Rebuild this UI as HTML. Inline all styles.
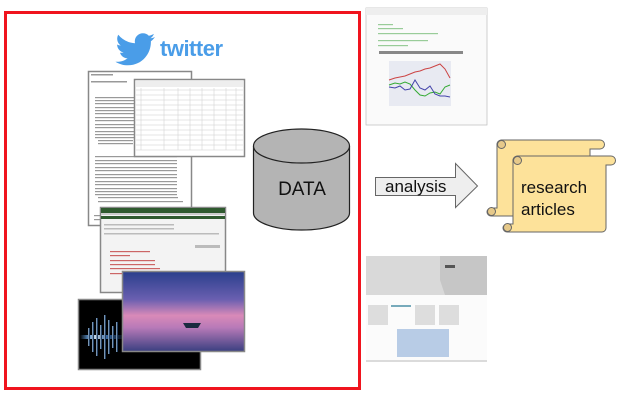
<!DOCTYPE html>
<html><head><style>
html,body{margin:0;padding:0;background:#fff;width:639px;height:409px;overflow:hidden;font-family:"Liberation Sans",sans-serif}
</style></head><body>
<svg width="639" height="409" xmlns="http://www.w3.org/2000/svg" font-family="Liberation Sans, sans-serif">
<defs>
<linearGradient id="sky" x1="0" y1="0" x2="0" y2="1">
<stop offset="0" stop-color="#2a3f8c"/><stop offset="0.35" stop-color="#6a5fb0"/><stop offset="0.55" stop-color="#d98ab8"/><stop offset="0.7" stop-color="#b87ab8"/><stop offset="1" stop-color="#3a3f80"/>
</linearGradient>
<linearGradient id="wv" x1="0" y1="0" x2="1" y2="0">
<stop offset="0" stop-color="#000"/><stop offset="0.2" stop-color="#6aa8e8"/><stop offset="0.35" stop-color="#e0f0ff"/><stop offset="0.6" stop-color="#3a70b0"/><stop offset="1" stop-color="#000"/>
</linearGradient>
</defs>
<rect x="5.5" y="12.5" width="354" height="376" fill="none" stroke="#f0141e" stroke-width="3"/>
<path d="M155 37c-1.5.7-3 1.1-4.6 1.3 1.7-1 2.9-2.600 3.5-4.4-1.6.9-3.300 1.6-5.100 1.900-1.500-1.600-3.600-2.500-5.900-2.500-4.400 0-8.100 3.600-8.100 8.100 0 .6.1 1.200.2 1.800-6.700-.3-12.700-3.600-16.700-8.500-.7 1.200-1.100 2.600-1.100 4.100 0 2.800 1.400 5.300 3.600 6.700-1.300 0-2.600-.4-3.700-1 0 3.900 2.800 7.200 6.500 8-.7.2-1.400.3-2.100.3-.5 0-1 0-1.500-.1 1 3.200 4 5.600 7.600 5.600-2.800 2.200-6.300 3.500-10.100 3.500-.7 0-1.300 0-2-.1 3.600 2.300 7.900 3.600 12.400 3.600 14.900 0 23-12.300 23-23v-1c1.600-1.100 2.900-2.600 4-4.200z" fill="#4a9de8"/>
<text x="160" y="56" font-size="22" font-weight="bold" fill="#4a9de8" letter-spacing="-0.5">twitter</text>
<rect x="88.5" y="71.5" width="103" height="154" fill="#fff" stroke="#888" stroke-width="1.5"/>
<g fill="#999">
<rect x="91" y="74" width="22" height="1.5"/><rect x="91" y="81" width="36" height="1.5"/>
<rect x="95" y="97" width="40" height="1.2"/><rect x="95" y="100" width="40" height="1.2"/><rect x="95" y="103" width="40" height="1.2"/><rect x="95" y="107" width="40" height="1.2"/><rect x="95" y="110" width="40" height="1.2"/><rect x="95" y="113" width="40" height="1.2"/><rect x="95" y="117" width="40" height="1.2"/><rect x="95" y="120" width="40" height="1.2"/><rect x="95" y="124" width="40" height="1.2"/><rect x="95" y="127" width="40" height="1.2"/><rect x="95" y="131" width="40" height="1.2"/><rect x="95" y="134" width="40" height="1.2"/><rect x="95" y="137" width="40" height="1.2"/><rect x="98" y="140" width="35" height="1.2"/><rect x="98" y="143" width="35" height="1.2"/>
<rect x="95" y="156" width="82" height="1.2"/><rect x="95" y="160" width="82" height="1.2"/><rect x="95" y="163" width="82" height="1.2"/><rect x="95" y="167" width="82" height="1.2"/><rect x="95" y="170" width="82" height="1.2"/><rect x="95" y="174" width="82" height="1.2"/><rect x="95" y="177" width="82" height="1.2"/><rect x="95" y="181" width="82" height="1.2"/><rect x="95" y="184" width="82" height="1.2"/><rect x="95" y="188" width="82" height="1.2"/><rect x="95" y="191" width="82" height="1.2"/><rect x="95" y="194" width="82" height="1.2"/><rect x="98" y="197" width="80" height="1.2"/><rect x="98" y="201" width="85" height="1.2"/>
<rect x="94" y="215" width="8" height="1.2"/><rect x="94" y="219" width="8" height="1.2"/>
</g>
<rect x="134.5" y="79.5" width="110" height="77" fill="#fff" stroke="#888" stroke-width="1.5"/>
<rect x="136" y="81" width="107" height="6" fill="#eee"/>
<g stroke="#ccc" stroke-width="0.5">
<line x1="136" y1="90" x2="243" y2="90"/><line x1="136" y1="95" x2="243" y2="95"/><line x1="136" y1="100" x2="243" y2="100"/><line x1="136" y1="105" x2="243" y2="105"/><line x1="136" y1="110" x2="243" y2="110"/><line x1="136" y1="115" x2="243" y2="115"/><line x1="136" y1="120" x2="243" y2="120"/><line x1="136" y1="125" x2="243" y2="125"/><line x1="136" y1="130" x2="243" y2="130"/><line x1="136" y1="135" x2="243" y2="135"/><line x1="136" y1="140" x2="243" y2="140"/><line x1="136" y1="145" x2="243" y2="145"/><line x1="136" y1="150" x2="243" y2="150"/>
<line x1="141" y1="88" x2="141" y2="150"/><line x1="164" y1="88" x2="164" y2="150"/><line x1="178" y1="88" x2="178" y2="150"/><line x1="190" y1="88" x2="190" y2="150"/><line x1="202" y1="88" x2="202" y2="150"/><line x1="214" y1="88" x2="214" y2="150"/><line x1="226" y1="88" x2="226" y2="150"/><line x1="236" y1="88" x2="236" y2="150"/>
</g>
<rect x="100.5" y="207.5" width="125" height="85" fill="#f3f3f3" stroke="#888" stroke-width="1.5"/>
<rect x="101" y="208" width="124" height="5" fill="#2f5a2f"/>
<rect x="101" y="213" width="124" height="2" fill="#ccc"/>
<rect x="101" y="216" width="124" height="3" fill="#2f5a2f"/>
<g fill="#bbb"><rect x="104" y="224" width="30" height="1.5"/><rect x="134" y="224" width="40" height="1.5"/><rect x="104" y="228" width="70" height="1.5"/><rect x="104" y="233" width="115" height="1.5"/><rect x="195" y="245" width="25" height="3"/></g>
<g fill="#c66"><rect x="110" y="251" width="40" height="1.2"/><rect x="110" y="255" width="20" height="1.2"/><rect x="110" y="260" width="45" height="1.2"/><rect x="110" y="264" width="45" height="1.2"/><rect x="110" y="268" width="50" height="1.2"/><rect x="110" y="273" width="40" height="1.2"/></g>
<rect x="78.5" y="299.5" width="122" height="70" fill="#000" stroke="#888" stroke-width="1.5"/>
<g fill="url(#wv)" opacity="0.9">
<rect x="80" y="335" width="45" height="4"/>
<rect x="88" y="328" width="2" height="18"/><rect x="92" y="322" width="2" height="30"/><rect x="96" y="318" width="2" height="38"/><rect x="100" y="325" width="2" height="24"/><rect x="104" y="315" width="2" height="44"/><rect x="108" y="320" width="2" height="34"/><rect x="112" y="326" width="2" height="22"/><rect x="116" y="322" width="2" height="30"/>
</g>
<rect x="122.5" y="271.5" width="122" height="80" fill="url(#sky)" stroke="#888" stroke-width="1.5"/>
<path d="M183 323 l18 0 -3 5 -12 0z" fill="#1a2a40"/>
<path d="M253.5 146 L253.5 213 A48 17 0 0 0 349.5 213 L349.5 146" fill="#b4b4b4" stroke="#222" stroke-width="1.2"/>
<ellipse cx="301.5" cy="146" rx="48" ry="17" fill="#b4b4b4" stroke="#222" stroke-width="1.2"/>
<text x="302" y="195" font-size="19" text-anchor="middle" fill="#111">DATA</text>
<rect x="366" y="8" width="121" height="117" fill="#fafafa" stroke="#bbb" stroke-width="0.7"/>
<rect x="366" y="8" width="121" height="7" fill="#eee"/>
<g fill="#9c9">
<rect x="378" y="24" width="15" height="1.2"/><rect x="378" y="28" width="25" height="1.2"/><rect x="378" y="33" width="60" height="1.2"/><rect x="378" y="40" width="50" height="1.2"/><rect x="378" y="45" width="30" height="1.2"/></g>
<rect x="379" y="51" width="84" height="3" fill="#888"/>
<rect x="389" y="61" width="62" height="45" fill="#e8eaf2"/>
<polyline points="389,80 395,78 400,77 405,76 410,74 415,72 420,71 425,69 430,68 435,66 440,64 445,69 450,78" fill="none" stroke="#c44" stroke-width="1"/>
<polyline points="389,85 395,83 400,84 405,82 410,84 415,90 420,95 425,96 430,93 435,92 440,94 445,87 450,85" fill="none" stroke="#3a3" stroke-width="1"/>
<polyline points="389,87 395,88 400,86 405,90 410,89 415,80 420,88 425,90 430,86 435,94 440,96 445,96 450,97" fill="none" stroke="#44a" stroke-width="1"/>
<path d="M375.5 177.5 H455.5 V163.5 L477.5 186 L455.5 207.5 V195.5 H375.5 Z" fill="#eee" stroke="#666" stroke-width="1"/>
<text x="385" y="192" font-size="17" fill="#111">analysis</text>
<g fill="#fde29a" stroke="#666" stroke-width="1">
<path d="M497 145 V208 H491 A4 4 0 0 0 491 216 H590 V149 H600 A4.5 4.5 0 0 0 600 140 H501 A4.5 4.5 0 0 0 497 145 Z"/>
<circle cx="501.5" cy="144.5" r="4" fill="#e6c98a"/>
<circle cx="491.5" cy="211.5" r="4" fill="#e6c98a"/>
<path d="M513 161 V224 H507 A4 4 0 0 0 507 232 H602 A4 4 0 0 0 606 228 V165 H611 A4.5 4.5 0 0 0 611 156 H517 A4.5 4.5 0 0 0 513 161Z"/>
<circle cx="517.5" cy="160.5" r="4" fill="#e6c98a"/>
<circle cx="507.5" cy="227.5" r="4" fill="#e6c98a"/>
</g>
<text x="521" y="193" font-size="17" fill="#111">research</text>
<text x="521" y="215" font-size="17" fill="#111">articles</text>
<rect x="366" y="256" width="121" height="39" fill="#d9d9d9"/>
<path d="M440 256 L487 256 L487 295 L445 295 L440 280 Z" fill="#c6c6c6"/>
<rect x="445" y="265" width="10" height="3" fill="#555"/>
<rect x="366" y="295" width="121" height="67" fill="#fbfbfb"/>
<g fill="#ddd"><rect x="368" y="305" width="20" height="20"/><rect x="415" y="305" width="20" height="20"/><rect x="439" y="305" width="20" height="20"/></g>
<rect x="391" y="305" width="20" height="2" fill="#7ab"/>
<rect x="397" y="329" width="52" height="28" fill="#b8cce6"/>
<line x1="366" y1="361" x2="487" y2="361" stroke="#bbb"/>
</svg>
</body></html>
